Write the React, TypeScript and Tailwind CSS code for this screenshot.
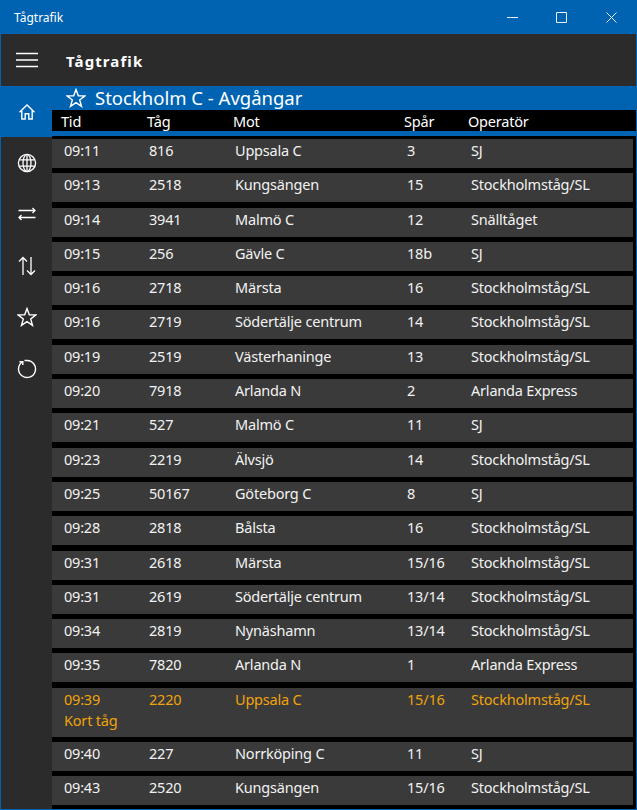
import React from "react";

const rows: [string, string, string, string, string][] = [
  ["09:11", "816", "Uppsala C", "3", "SJ"],
  ["09:13", "2518", "Kungsängen", "15", "Stockholmståg/SL"],
  ["09:14", "3941", "Malmö C", "12", "Snälltåget"],
  ["09:15", "256", "Gävle C", "18b", "SJ"],
  ["09:16", "2718", "Märsta", "16", "Stockholmståg/SL"],
  ["09:16", "2719", "Södertälje centrum", "14", "Stockholmståg/SL"],
  ["09:19", "2519", "Västerhaninge", "13", "Stockholmståg/SL"],
  ["09:20", "7918", "Arlanda N", "2", "Arlanda Express"],
  ["09:21", "527", "Malmö C", "11", "SJ"],
  ["09:23", "2219", "Älvsjö", "14", "Stockholmståg/SL"],
  ["09:25", "50167", "Göteborg C", "8", "SJ"],
  ["09:28", "2818", "Bålsta", "16", "Stockholmståg/SL"],
  ["09:31", "2618", "Märsta", "15/16", "Stockholmståg/SL"],
  ["09:31", "2619", "Södertälje centrum", "13/14", "Stockholmståg/SL"],
  ["09:34", "2819", "Nynäshamn", "13/14", "Stockholmståg/SL"],
  ["09:35", "7820", "Arlanda N", "1", "Arlanda Express"],
  ["09:39", "2220", "Uppsala C", "15/16", "Stockholmståg/SL"],
  ["09:40", "227", "Norrköping C", "11", "SJ"],
  ["09:43", "2520", "Kungsängen", "15/16", "Stockholmståg/SL"],
];

const Star = ({ size }: { size: number }) => (
  <svg width={size} height={size} viewBox="0 0 20 20" fill="none" stroke="currentColor" strokeWidth="1.4" strokeLinejoin="miter">
    <path d="M10 1.6 12.3 7.7 18.9 7.9 13.7 12 15.5 18.4 10 14.7 4.5 18.4 6.3 12 1.1 7.9 7.7 7.7Z" />
  </svg>
);

const Home = () => (
  <svg width="18" height="18" viewBox="0 0 18 18" fill="none" stroke="currentColor" strokeWidth="1.4">
    <path d="M1.5 9.3 9 2 16.5 9.3M3.8 7.2V16H7.2V10.8H10.8V16H14.2V7.2" />
  </svg>
);

const Globe = () => (
  <svg width="20" height="20" viewBox="0 0 20 20" fill="none" stroke="currentColor" strokeWidth="1.3">
    <circle cx="10" cy="10" r="8.6" />
    <ellipse cx="10" cy="10" rx="4" ry="8.6" />
    <path d="M10 1.4V18.6M2.2 6.8H17.8M2.2 13.2H17.8" />
  </svg>
);

const Swap = () => (
  <svg width="18" height="14" viewBox="0 0 18 14" fill="none" stroke="currentColor" strokeWidth="1.3">
    <path d="M0.5 3.5H17M14.5 1 17 3.5 14.5 6M17.5 10.5H1M3.5 8 1 10.5 3.5 13" />
  </svg>
);

const UpDown = () => (
  <svg width="18" height="20" viewBox="0 0 18 20" fill="none" stroke="currentColor" strokeWidth="1.3">
    <path d="M5 19V1.5M1 5.5 5 1.5 9 5.5M13 1V18.5M9 14.5 13 18.5 17 14.5" />
  </svg>
);

const Refresh = () => (
  <svg width="20" height="20" viewBox="0 0 20 20" fill="none" stroke="currentColor" strokeWidth="1.4">
    <path d="M5.2 3A8.5 8.5 0 1 0 10 1.5H7.5M5.8 6V2.8H2.4" />
  </svg>
);

const NavItem = ({ children, active }: { children: React.ReactNode; active?: boolean }) => (
  <div className={`flex h-[51.4px] items-center justify-center text-white ${active ? "bg-[#0063b1]" : ""}`}>{children}</div>
);

export default function App() {
  return (
    <div className="flex h-[810px] w-[637px] flex-col overflow-hidden border border-[#0063b1] bg-[#2b2b2b] font-['Noto_Sans',sans-serif] text-white">
      <div className="flex h-[33px] shrink-0 items-center justify-between bg-[#0063b1]">
        <span className="pl-[13px] text-[12px]">Tågtrafik</span>
        <div className="flex items-center">
          <div className="flex h-[33px] w-[49px] items-center justify-center">
            <svg width="11" height="11" viewBox="0 0 11 11" stroke="#e8f0f8" fill="none"><path d="M0 5.5H11" /></svg>
          </div>
          <div className="flex h-[33px] w-[49px] items-center justify-center">
            <svg width="11" height="11" viewBox="0 0 11 11" stroke="#e8f0f8" fill="none"><path d="M.5.5H10.5V10.5H.5Z" /></svg>
          </div>
          <div className="flex h-[33px] w-[50px] items-center justify-center">
            <svg width="11" height="11" viewBox="0 0 11 11" stroke="#e8f0f8" fill="none"><path d="M.5.5 10.5 10.5M10.5.5 .5 10.5" /></svg>
          </div>
        </div>
      </div>

      <div className="flex h-[52px] shrink-0 items-center">
        <div className="flex w-[51px] justify-center">
          <svg width="22" height="16" viewBox="0 0 22 16" stroke="#fff" strokeWidth="1.4" fill="none"><path d="M0 1.5H22M0 8H22M0 14.5H22" /></svg>
        </div>
        <span className="pl-[14px] pt-[2px] text-[15px] font-bold tracking-[1.1px]">Tågtrafik</span>
      </div>

      <div className="flex min-h-0 flex-1">
        <nav className="w-[51px] shrink-0">
          <NavItem active><Home /></NavItem>
          <NavItem><Globe /></NavItem>
          <NavItem><Swap /></NavItem>
          <NavItem><UpDown /></NavItem>
          <NavItem><Star size={20} /></NavItem>
          <NavItem><Refresh /></NavItem>
        </nav>

        <main className="flex min-w-0 flex-1 flex-col bg-black">
          <div className="bg-[#0063b1]">
            <div className="flex h-[24px] items-center gap-[9px] pl-[14px] text-[18.5px] leading-[24px]">
              <Star size={20} />
              <span>Stockholm C - Avgångar</span>
            </div>
            <div className="grid h-[21px] grid-cols-[86px_86px_171px_64px_1fr] items-start bg-black pl-[9px] pt-[1px] text-[14.5px] leading-[21px] tracking-[-0.2px]">
              <span>Tid</span>
              <span>Tåg</span>
              <span>Mot</span>
              <span>Spår</span>
              <span>Operatör</span>
            </div>
            <div className="h-[5px]" />
          </div>

          <div className="flex flex-col gap-[5.3px] pt-[3px] pr-[3px]">
            {rows.map((r) => {
              const late = r[0] === "09:39";
              return (
                <div
                  key={r[0] + r[1]}
                  className={`grid shrink-0 grid-cols-[85px_86px_172px_64px_1fr] bg-[#3a3a3a] pl-3 pt-[1px] text-[14.5px] leading-[21px] tracking-[-0.2px] ${late ? "h-[49px] text-[#f0a30a]" : "h-[29px] text-[#f2f2f2]"}`}
                >
                  {late ? (
                    <div>
                      <div>{r[0]}</div>
                      <div>Kort tåg</div>
                    </div>
                  ) : (
                    <span>{r[0]}</span>
                  )}
                  <span>{r[1]}</span>
                  <span>{r[2]}</span>
                  <span>{r[3]}</span>
                  <span>{r[4]}</span>
                </div>
              );
            })}
          </div>
        </main>
      </div>
    </div>
  );
}
